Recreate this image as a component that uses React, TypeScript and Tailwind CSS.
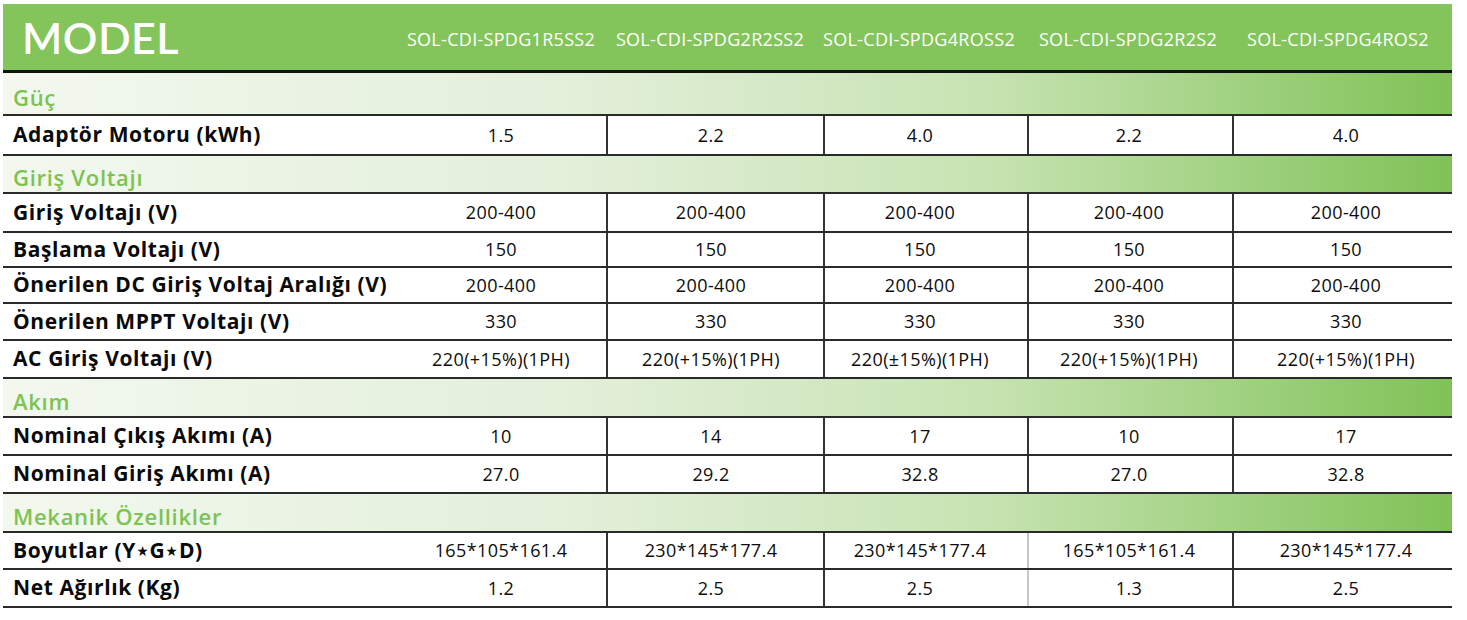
const models = ["SOL-CDI-SPDG1R5SS2", "SOL-CDI-SPDG2R2SS2", "SOL-CDI-SPDG4ROSS2", "SOL-CDI-SPDG2R2S2", "SOL-CDI-SPDG4ROS2"];

type Row =
  | { kind: "section"; title: string; h: string }
  | { kind: "data"; label: string; values: string[]; h: string; softLine?: boolean };

const rows: Row[] = [
  { kind: "section", title: "Güç", h: "h-[43px]" },
  { kind: "data", label: "Adaptör Motoru (kWh)", values: ["1.5", "2.2", "4.0", "2.2", "4.0"], h: "h-[40px]" },
  { kind: "section", title: "Giriş Voltajı", h: "h-[38px]" },
  { kind: "data", label: "Giriş Voltajı (V)", values: ["200-400", "200-400", "200-400", "200-400", "200-400"], h: "h-[39px]" },
  { kind: "data", label: "Başlama Voltajı (V)", values: ["150", "150", "150", "150", "150"], h: "h-[35px]" },
  { kind: "data", label: "Önerilen DC Giriş Voltaj Aralığı (V)", values: ["200-400", "200-400", "200-400", "200-400", "200-400"], h: "h-[36px]" },
  { kind: "data", label: "Önerilen MPPT Voltajı (V)", values: ["330", "330", "330", "330", "330"], h: "h-[37px]" },
  { kind: "data", label: "AC Giriş Voltajı (V)", values: ["220(+15%)(1PH)", "220(+15%)(1PH)", "220(±15%)(1PH)", "220(+15%)(1PH)", "220(+15%)(1PH)"], h: "h-[38px]" },
  { kind: "section", title: "Akım", h: "h-[39px]" },
  { kind: "data", label: "Nominal Çıkış Akımı (A)", values: ["10", "14", "17", "10", "17"], h: "h-[38px]" },
  { kind: "data", label: "Nominal Giriş Akımı (A)", values: ["27.0", "29.2", "32.8", "27.0", "32.8"], h: "h-[38px]" },
  { kind: "section", title: "Mekanik Özellikler", h: "h-[39px]" },
  { kind: "data", label: "Boyutlar (Y⋆G⋆D)", values: ["165*105*161.4", "230*145*177.4", "230*145*177.4", "165*105*161.4", "230*145*177.4"], h: "h-[37px]", softLine: true },
  { kind: "data", label: "Net Ağırlık (Kg)", values: ["1.2", "2.5", "2.5", "1.3", "2.5"], h: "h-[38px]", softLine: true },
];

const cols = "grid grid-cols-[393px_210px_217px_204px_205px_220px]";
// small nudges so the text sits where the source puts it
const headNudge = ["", "pr-[9px]", "pr-[12px]", "pr-[3px]", "pr-[8px]"];
const valNudge = ["", "pr-[9px]", "pr-[12px]", "pr-[3px]", "pl-[6px]"];

export default function App() {
  return (
    <div className="w-[1467px] h-[620px] bg-white overflow-hidden">
      <div className="ml-[3px] pt-[4px] w-[1449px]">
        {/* header */}
        <div className={`${cols} h-[69px] bg-[#83c55a] border-b-[3px] border-[#111]`}>
          <div className="flex items-center pl-[19px] pt-[2px] text-white text-[43px] font-semibold font-['Lato',sans-serif] tracking-[0.5px]">
            MODEL
          </div>
          {models.map((m, j) => (
            <div
              key={m}
              className={`flex items-center justify-center pt-[4px] text-white text-[18px] tracking-[0.3px] font-['Open_Sans',sans-serif] font-medium ${headNudge[j]}`}
            >
              {m}
            </div>
          ))}
        </div>

        {rows.map((r, i) =>
          r.kind === "section" ? (
            <div
              key={i}
              className={`${r.h} flex items-center pl-[10px] pt-[7px] border-b-2 border-[#2a2a2a] bg-[linear-gradient(to_right,#f3f8ef_0%,#e2efd9_40%,#c7e3b2_68%,#80c257_100%)]`}
            >
              <span className="text-[#7cc352] text-[22px] font-semibold font-['Open_Sans',sans-serif] tracking-[0.7px]">{r.title}</span>
            </div>
          ) : (
            <div key={i} className={`${cols} ${r.h} border-b-2 border-[#2a2a2a]`}>
              <div className="flex items-center pl-[10px] whitespace-nowrap text-[#0a0a0a] text-[21px] font-bold font-['Open_Sans',sans-serif] tracking-[0.6px]">
                {r.label}
              </div>
              {r.values.map((v, j) => (
                <div
                  key={j}
                  className={`flex items-center justify-center whitespace-nowrap text-[#0d0d0d] text-[18px] tracking-[0.4px] font-['Open_Sans',sans-serif] ${valNudge[j]} ${
                    j === 0 ? "" : r.softLine && j === 3 ? "border-l-2 border-[#c8c8c8]" : "border-l-2 border-[#333]"
                  }`}
                >
                  {v}
                </div>
              ))}
            </div>
          )
        )}
      </div>
    </div>
  );
}
